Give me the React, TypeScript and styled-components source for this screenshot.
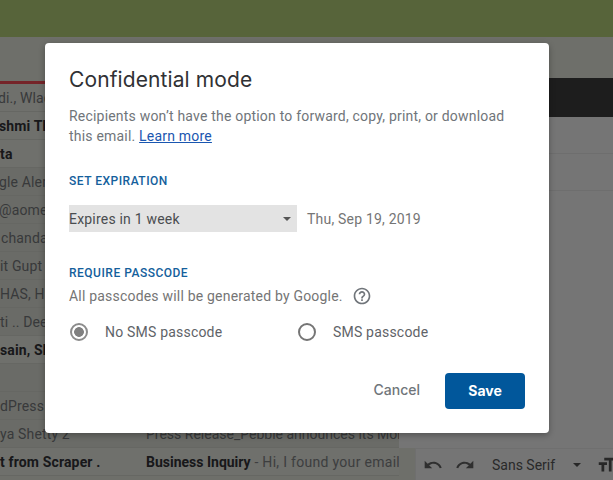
import React from 'react'
import styled, { createGlobalStyle } from 'styled-components'

const GlobalStyle = createGlobalStyle`
  html, body {
    margin: 0;
    padding: 0;
    background: #fff;
    font-family: Roboto, "Liberation Sans", sans-serif;
  }
`

const mails = [
  { sender: 'di., Wlad', bold: false, tint: false, offset: -2 },
  { sender: 'shmi Th', bold: true, tint: false, offset: -1 },
  { sender: 'ta', bold: true, tint: false, offset: 0 },
  { sender: 'gle Aler', bold: false, tint: true, offset: -1 },
  { sender: '@aomei', bold: false, tint: true, offset: -1 },
  { sender: 'chandan', bold: false, tint: true, offset: 1 },
  { sender: 'it Gupt', bold: false, tint: true, offset: 0 },
  { sender: 'HAS, H', bold: false, tint: true, offset: 0 },
  { sender: 'ti .. Dee', bold: false, tint: true, offset: 0 },
  { sender: 'sain, Sh', bold: true, tint: false, offset: 0 },
  { sender: '', bold: false, tint: true, offset: 0 },
  { sender: 'dPress', bold: false, tint: true, offset: 0 },
  { sender: 'ya Shetty 2', bold: false, tint: true, offset: 0, subject: 'Press Release_Pebble announces its Mobile' },
  { sender: 't from Scraper .', bold: true, tint: false, offset: 0, subject: 'Business Inquiry', snippet: ' - Hi, I found your email' },
]

const App: React.FunctionComponent = () => {
  return (
    <>
      <GlobalStyle />
      <Page>
        <TopBar />
        <Workspace>
          <MailList>
            <RedRule />
            {mails.map((m, i) => (
              <MailRow key={i} $tint={m.tint}>
                <Sender $bold={m.bold} $offset={m.offset}>{m.sender}</Sender>
                <Subject $bold={m.bold}>
                  {m.subject}
                  {m.snippet && <Snippet>{m.snippet}</Snippet>}
                </Subject>
              </MailRow>
            ))}
          </MailList>
          <ComposePane>
            <ComposeHeader />
            <ComposeField />
            <ComposeField />
            <ComposeBody />
            <Toolbar>
              <ToolIcon viewBox="0 0 24 24"><path d="M12.5 8c-2.65 0-5.05.99-6.9 2.6L2 7v9h9l-3.62-3.62c1.39-1.16 3.16-1.88 5.12-1.88 3.54 0 6.55 2.31 7.6 5.5l2.37-.78C21.08 11.03 17.15 8 12.5 8z" /></ToolIcon>
              <ToolIcon viewBox="0 0 24 24"><path d="M18.4 10.6C16.55 8.99 14.15 8 11.5 8c-4.65 0-8.58 3.03-9.96 7.22L3.9 16c1.05-3.19 4.05-5.5 7.6-5.5 1.95 0 3.73.72 5.12 1.88L13 16h9V7l-3.6 3.6z" /></ToolIcon>
              <FontName>Sans Serif</FontName>
              <ToolCaret />
              <SizeIcon viewBox="0 0 24 24"><path d="M9 4v3h5v12h3V7h5V4H9zm-6 8h3v7h3v-7h3V9H3v3z" /></SizeIcon>
            </Toolbar>
          </ComposePane>
        </Workspace>
        <Scrim>
          <Dialog>
            <Title>Confidential mode</Title>
            <Description>
              Recipients won’t have the option to forward, copy, print, or download this email. <LearnMore href="#">Learn more</LearnMore>
            </Description>
            <SectionLabel>SET EXPIRATION</SectionLabel>
            <ExpiryRow>
              <Select>
                <span>Expires in 1 week</span>
                <Caret />
              </Select>
              <ExpiryDate>Thu, Sep 19, 2019</ExpiryDate>
            </ExpiryRow>
            <PasscodeLabel>REQUIRE PASSCODE</PasscodeLabel>
            <PasscodeNote>
              All passcodes will be generated by Google.
              <HelpIcon viewBox="0 0 24 24"><path d="M11 18h2v-2h-2v2zm1-16C6.48 2 2 6.48 2 12s4.48 10 10 10 10-4.48 10-10S17.52 2 12 2zm0 18c-4.41 0-8-3.59-8-8s3.59-8 8-8 8 3.59 8 8-3.59 8-8 8zm0-14c-2.21 0-4 1.79-4 4h2c0-1.1.9-2 2-2s2 .9 2 2c0 2-3 1.75-3 5h2c0-2.25 3-2.5 3-5 0-2.21-1.79-4-4-4z" /></HelpIcon>
            </PasscodeNote>
            <RadioRow>
              <RadioOption>
                <Radio $checked />
                <RadioText>No SMS passcode</RadioText>
              </RadioOption>
              <RadioOption>
                <Radio />
                <RadioText>SMS passcode</RadioText>
              </RadioOption>
            </RadioRow>
            <Actions>
              <CancelButton type="button">Cancel</CancelButton>
              <SaveButton type="button">Save</SaveButton>
            </Actions>
          </Dialog>
        </Scrim>
      </Page>
    </>
  )
}

export default App


const Page = styled.div`
  position: relative;
  width: 613px;
  height: 480px;
  overflow: hidden;
  display: flex;
  flex-direction: column;
`

const TopBar = styled.div`
  flex: 0 0 37px;
  background: #57643a;
`

const Workspace = styled.div`
  flex: 1;
  display: flex;
  min-height: 0;
`

const MailList = styled.div`
  flex: 0 0 399px;
  padding-top: 44px;
  overflow: hidden;
  background: #eff1e8;
`

const RedRule = styled.div`
  height: 3px;
  background: #ff4f5a;
`

const MailRow = styled.div<{ $tint: boolean }>`
  height: 27px;
  display: flex;
  align-items: center;
  border-bottom: 1px solid #dfe1d7;
  background: ${({ $tint }) => ($tint ? '#e8eae0' : '#f2f3ec')};
  font-size: 14px;
  letter-spacing: 0.15px;
  white-space: nowrap;
`

const Sender = styled.div<{ $bold: boolean; $offset: number }>`
  flex: 0 0 146px;
  box-sizing: border-box;
  padding-left: ${({ $offset }) => Math.max($offset, 0)}px;
  margin-left: ${({ $offset }) => Math.min($offset, 0)}px;
  font-weight: ${({ $bold }) => ($bold ? 700 : 400)};
  color: ${({ $bold }) => ($bold ? '#35363a' : '#7a7d80')};
`

const Subject = styled.div<{ $bold: boolean }>`
  letter-spacing: 0;
  font-weight: ${({ $bold }) => ($bold ? 700 : 400)};
  color: ${({ $bold }) => ($bold ? '#35363a' : '#7a7d80')};
`

const Snippet = styled.span`
  font-weight: 400;
  letter-spacing: 0.3px;
  color: #85888a;
`

const ComposePane = styled.div`
  flex: 1;
  padding-top: 41px;
  display: flex;
  flex-direction: column;
  background: #eff1e8;
`

const ComposeHeader = styled.div`
  flex: 0 0 39px;
  background: #404040;
`

const ComposeField = styled.div`
  flex: 0 0 36px;
  background: #fff;
  border-bottom: 1px solid #efefef;
`

const ComposeBody = styled.div`
  flex: 1;
  background: #fff;
`

const Toolbar = styled.div`
  flex: 0 0 32px;
  margin-left: 16px;
  box-sizing: border-box;
  display: flex;
  align-items: center;
  padding-left: 7px;
  background: #fff;
  border-top: 1px solid #f1f1f1;
  border-left: 1px solid #f1f1f1;
  overflow: hidden;
`

const ToolIcon = styled.svg`
  flex: 0 0 20px;
  width: 20px;
  height: 20px;
  margin-right: 12px;
  fill: #666;
`

const FontName = styled.span`
  margin-left: 5px;
  width: 81px;
  font-size: 14px;
  color: #5a5a5a;
`

const ToolCaret = styled.span`
  width: 0;
  height: 0;
  border-left: 4px solid transparent;
  border-right: 4px solid transparent;
  border-top: 4px solid #555;
`

const SizeIcon = styled.svg`
  flex: 0 0 22px;
  width: 22px;
  height: 22px;
  margin-left: 15px;
  fill: #555;
`

const Scrim = styled.div`
  position: absolute;
  top: 37px;
  left: 0;
  right: 0;
  bottom: 0;
  background: rgba(0, 0, 0, 0.54);
  padding: 6px 0 0 45px;
`

const Dialog = styled.div`
  box-sizing: border-box;
  width: 504px;
  height: 390px;
  padding: 24px 24px 0;
  background: #fff;
  border-radius: 4px;
  box-shadow: 0 2px 6px rgba(0, 0, 0, 0.3);
`

const Title = styled.h1`
  margin: 0;
  font-family: Inter, "Open Sans", sans-serif;
  font-size: 21px;
  line-height: 26px;
  font-weight: 400;
  letter-spacing: 0.1px;
  color: #303134;
`

const Description = styled.p`
  margin: 13px 0 0;
  font-size: 14px;
  line-height: 20px;
  letter-spacing: 0.2px;
  color: #70757a;
`

const LearnMore = styled.a`
  color: #1a56b0;
`

const SectionLabel = styled.div`
  margin-top: 27px;
  font-size: 12px;
  line-height: 16px;
  font-weight: 500;
  letter-spacing: 0.5px;
  color: #14609c;
`

const PasscodeLabel = styled(SectionLabel)`
  margin-top: 33px;
`

const ExpiryRow = styled.div`
  margin-top: 16px;
  display: flex;
  align-items: center;
`

const Select = styled.div`
  box-sizing: border-box;
  width: 228px;
  height: 27px;
  display: flex;
  align-items: center;
  justify-content: space-between;
  padding-right: 6px;
  background: #e3e3e3;
  font-size: 14px;
  letter-spacing: 0.2px;
  color: #4a4d50;
`

const Caret = styled.span`
  width: 0;
  height: 0;
  border-left: 4px solid transparent;
  border-right: 4px solid transparent;
  border-top: 4px solid #555;
`

const ExpiryDate = styled.span`
  margin-left: 10px;
  font-size: 14px;
  letter-spacing: 0.2px;
  color: #757575;
`

const PasscodeNote = styled.div`
  margin-top: 5px;
  display: flex;
  align-items: center;
  height: 20px;
  font-size: 14px;
  letter-spacing: 0.2px;
  color: #757575;
`

const HelpIcon = styled.svg`
  width: 20px;
  height: 20px;
  margin-left: 9px;
  fill: #70757a;
`

const RadioRow = styled.div`
  margin-top: 17px;
  padding-left: 1px;
  display: flex;
`

const RadioOption = styled.label`
  flex: 0 0 228px;
  display: flex;
  align-items: center;
`

const Radio = styled.span<{ $checked?: boolean }>`
  box-sizing: border-box;
  flex: 0 0 18px;
  height: 18px;
  border: 2px solid ${({ $checked }) => ($checked ? '#8c8c8c' : '#757575')};
  border-radius: 50%;
  background: ${({ $checked }) => ($checked ? 'radial-gradient(circle, #808080 0 4.5px, #fff 5.2px)' : '#fff')};
`

const RadioText = styled.span`
  margin-left: 17px;
  font-size: 14px;
  letter-spacing: 0.2px;
  color: #5f6368;
`

const Actions = styled.div`
  margin-top: 32px;
  display: flex;
  justify-content: flex-end;
  align-items: center;
  gap: 25px;
`

const CancelButton = styled.button`
  padding: 0 0 3px;
  border: 0;
  background: none;
  font-family: Inter, "Open Sans", sans-serif;
  font-size: 14px;
  font-weight: 500;
  color: #70757a;
`

const SaveButton = styled.button`
  width: 80px;
  height: 36px;
  padding: 0 0 2px;
  border: 0;
  border-radius: 4px;
  background: #01579b;
  font-family: Inter, "Open Sans", sans-serif;
  font-size: 14px;
  font-weight: 700;
  color: #fff;
`
